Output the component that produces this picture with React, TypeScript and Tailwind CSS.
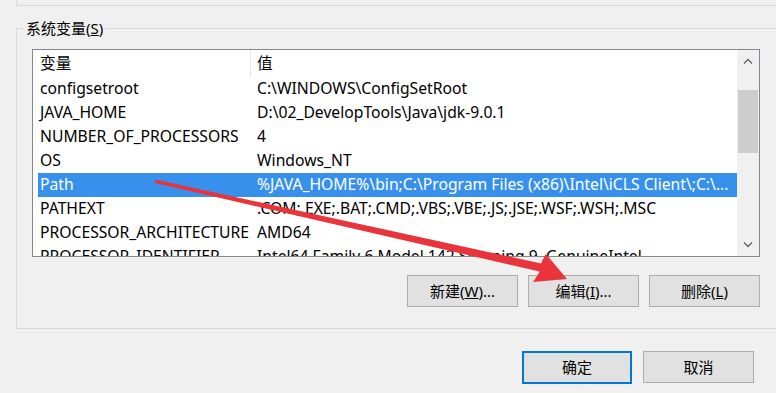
const FONT = { fontFamily: '"Noto Sans", "Noto Sans CJK SC", sans-serif' }

const rows: [string, string][] = [
  ['configsetroot', 'C:\\WINDOWS\\ConfigSetRoot'],
  ['JAVA_HOME', 'D:\\02_DevelopTools\\Java\\jdk-9.0.1'],
  ['NUMBER_OF_PROCESSORS', '4'],
  ['OS', 'Windows_NT'],
  ['Path', '%JAVA_HOME%\\bin;C:\\Program Files (x86)\\Intel\\iCLS Client\\;C:\\...'],
  ['PATHEXT', '.COM;.EXE;.BAT;.CMD;.VBS;.VBE;.JS;.JSE;.WSF;.WSH;.MSC'],
  ['PROCESSOR_ARCHITECTURE', 'AMD64'],
  ['PROCESSOR_IDENTIFIER', 'Intel64 Family 6 Model 142 Stepping 9, GenuineIntel'],
]

function Btn({ children, focused }: { children: React.ReactNode; focused?: boolean }) {
  return (
    <button
      className={
        focused
          ? 'w-[110px] h-[33px] bg-[#e1e1e1] border-2 border-[#0078d7] text-[15px] text-black'
          : 'w-[111px] h-[32px] bg-[#e1e1e1] border border-[#adadad] text-[15px] text-black'
      }
    >
      {children}
    </button>
  )
}

function Chevron({ up }: { up?: boolean }) {
  return (
    <svg width="10" height="6" viewBox="0 0 10 6">
      <path d={up ? 'M1 5.5 L5 1.5 L9 5.5' : 'M1 0.5 L5 4.5 L9 0.5'} fill="none" stroke="#606060" strokeWidth="1.3" />
    </svg>
  )
}

export default function App() {
  return (
    <div className="relative w-[776px] h-[393px] overflow-hidden bg-[#f0f0f0] text-black" style={FONT}>
      {/* bottom of the user variables group */}
      <div className="ml-[16px] h-[6px] border-l border-b border-[#d9d9d9]" />

      {/* 系统变量 group */}
      <div className="relative ml-[16px] mt-[22px] w-[780px] h-[301px] border border-[#d9d9d9]">
        <span className="absolute left-[7px] top-[-11px] px-[2px] bg-[#f0f0f0] text-[15px] leading-[20px]">
          系统变量(<u>S</u>)
        </span>

        <div className="ml-[15px] mt-[20px] w-[728px] h-[208px] border border-[#828790] bg-white flex overflow-hidden">
          <div className="flex-1 min-w-0 flex flex-col">
            <div className="flex h-[27px] items-center text-[15.7px] shrink-0">
              <div className="ml-[5px] w-[213px] pl-[2px] h-full flex items-center border-r border-[#e5e5e5]">变量</div>
              <div className="pl-[6px]">值</div>
            </div>
            {rows.map(([k, v]) => {
              const sel = k === 'Path'
              return (
                <div
                  key={k}
                  className={
                    sel
                      ? 'ml-[5px] flex h-[24px] shrink-0 items-center text-[15.7px] bg-[#3791ec] text-white'
                      : 'ml-[5px] flex h-[24px] shrink-0 items-center text-[15.7px]'
                  }
                >
                  <div className="w-[213px] pl-[2px] whitespace-nowrap overflow-hidden">{k}</div>
                  <div className="flex-1 pl-[6px] whitespace-nowrap overflow-hidden">{v}</div>
                </div>
              )
            })}
          </div>
          {/* scrollbar */}
          <div className="w-[22px] shrink-0 bg-[#f0f0f0] flex flex-col">
            <div className="h-[22px] flex items-center justify-center">
              <Chevron up />
            </div>
            <div className="flex-1 px-[1px]">
              <div className="mt-[18px] h-[63px] bg-[#cdcdcd]" />
            </div>
            <div className="h-[22px] flex items-center justify-center">
              <Chevron />
            </div>
          </div>
        </div>

        <div className="ml-[15px] mt-[18px] w-[728px] flex justify-end gap-[10px]">
          <Btn>
            新建(<u>W</u>)...
          </Btn>
          <Btn>
            编辑(<u>I</u>)...
          </Btn>
          <Btn>
            删除(<u>L</u>)
          </Btn>
        </div>
      </div>
      <div className="ml-[16px] mt-[3px] h-[1px] bg-[#e6e6e6]" />

      <div className="w-[754px] mt-[18px] flex justify-end gap-[11px]">
        <Btn focused>确定</Btn>
        <Btn>取消</Btn>
      </div>

      {/* red annotation arrow */}
      <svg className="absolute inset-0 pointer-events-none" width="776" height="393" viewBox="0 0 776 393">
        <polygon points="155,179.5 548,265 546,273 155,183" fill="#e8343a" />
        <polygon points="567,279 533,282 539,273 542,261 546,254" fill="#e8343a" />
      </svg>
    </div>
  )
}
